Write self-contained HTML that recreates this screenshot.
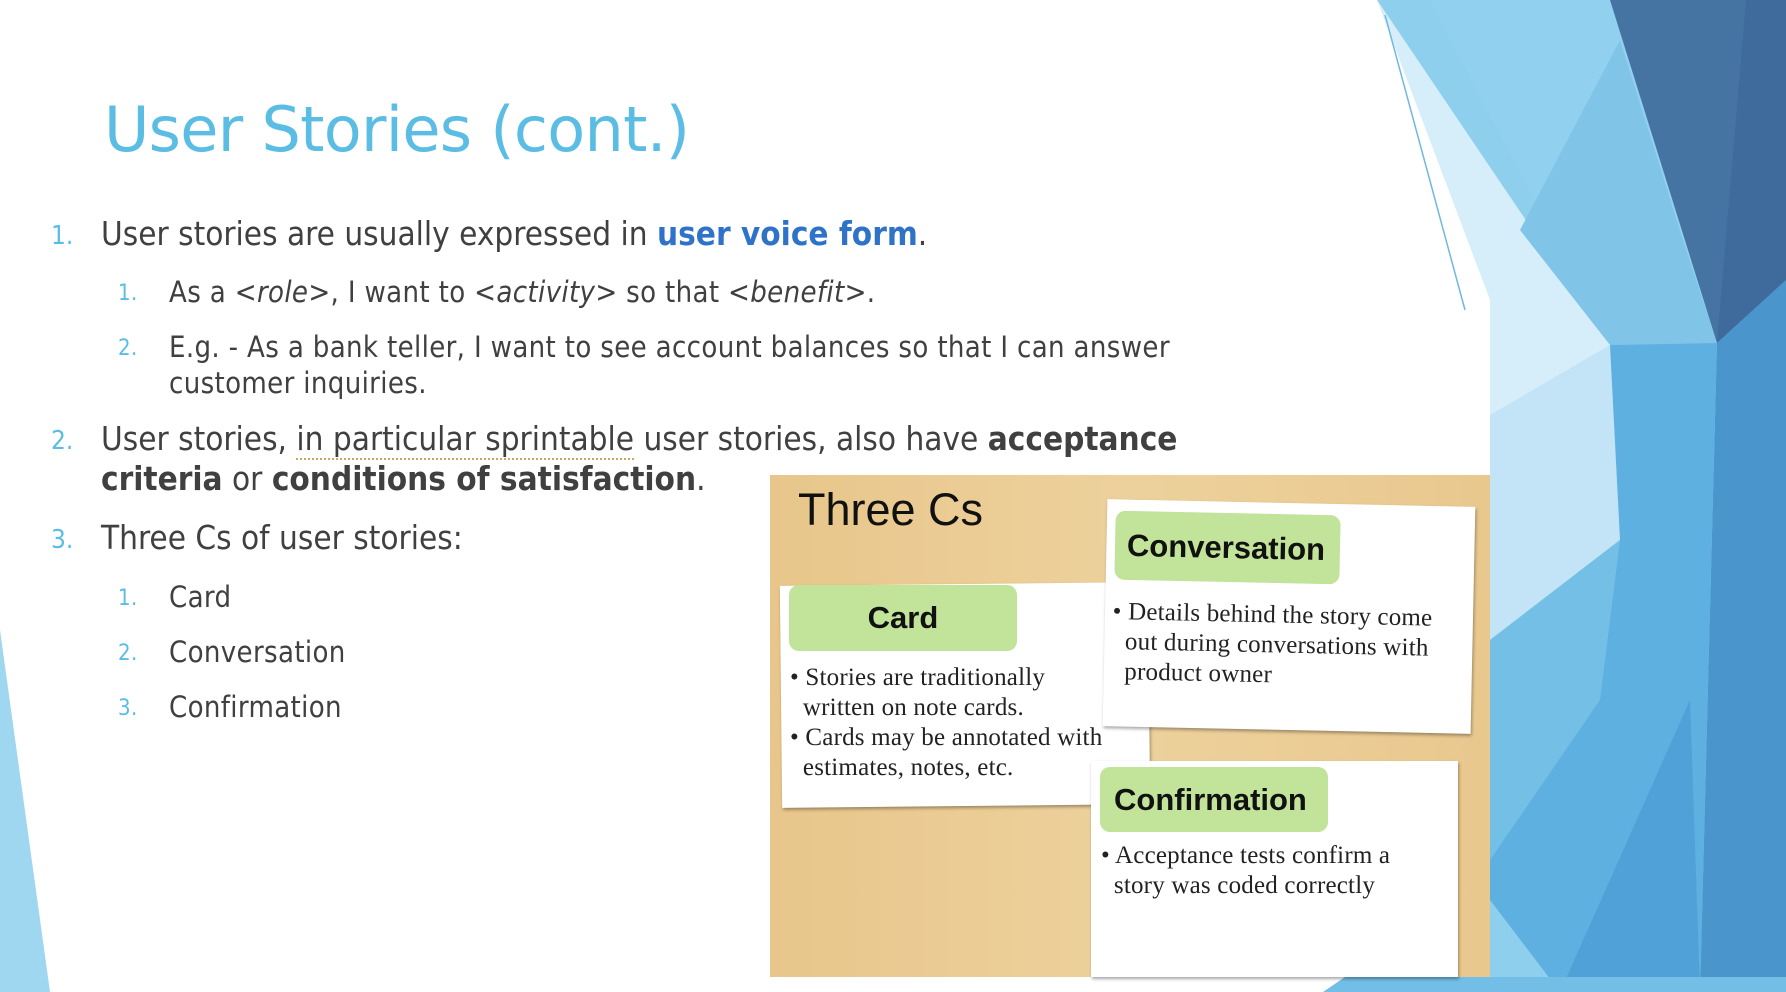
<!DOCTYPE html>
<html><head><meta charset="utf-8"><style>
html,body{margin:0;padding:0;width:1786px;height:992px;overflow:hidden;background:#fff;position:relative;font-family:"DejaVu Sans Condensed","Liberation Sans",sans-serif;color:#404040}
.a{position:absolute;white-space:nowrap}
.t{font-size:62px;color:#5bbde4;left:104px;top:93px;font-family:"DejaVu Sans","Liberation Sans",sans-serif;letter-spacing:-0.7px}
.n{color:#5bbde4}
.l1{font-size:33px}
.l2{font-size:29px;letter-spacing:0.35px}
.blue{color:#2f73c9;font-weight:bold}
.board{position:absolute;left:770px;top:475px;width:720px;height:502px;background:linear-gradient(90deg,#e8c68b,#edd19c 50%,#e9c88e)}
.card{position:absolute;background:#fff;box-shadow:1px 2px 3px rgba(0,0,0,.35)}
.lab{position:absolute;background:#c2e39a;border-radius:10px;font-family:"Liberation Sans",sans-serif;font-size:31px;font-weight:bold;color:#111}
.s{position:absolute;font-family:"Liberation Serif",serif;font-size:25px;letter-spacing:0.2px;color:#222;line-height:30px;white-space:nowrap}
</style></head><body>
<svg class="a" style="left:0;top:0" width="1786" height="992">
<polygon points="0,630 0,992 50,992" fill="#9fd6f0"/>
<polygon points="1377,0 1786,0 1786,992 1490,992 1490,415 1610,345" fill="#8fcfee"/>
<polygon points="1377,0 1610,345 1490,415 1490,300" fill="#d6eefa"/>
<polygon points="1430,0 1620,0 1717,343 1610,345" fill="#92d0ef"/>
<polygon points="1620,40 1683,240 1717,343 1610,345 1520,230" fill="#80c5e8"/>
<polygon points="1610,0 1786,0 1786,280 1717,343" fill="#4574a3"/>
<polygon points="1746,0 1786,0 1786,280 1717,343" fill="#3e6a9c"/>
<polygon points="1717,343 1786,280 1786,992 1700,992" fill="#4a96cc"/>
<polygon points="1610,345 1717,343 1700,992 1560,992 1490,900 1490,680" fill="#5eb0e1"/>
<polygon points="1610,345 1490,415 1490,640 1620,540" fill="#c3e4f6"/>
<polygon points="1560,992 1700,992 1690,700" fill="#4fa1d8"/>
<polygon points="1490,640 1620,540 1600,700 1490,860" fill="#74bfe6"/>
<polygon points="1323,992 1345,977 1786,977 1786,992" fill="#72bee7"/>
<line x1="1385" y1="15" x2="1465" y2="310" stroke="#6fb8e0" stroke-width="1.5"/>
</svg>
<div class="a t">User Stories (cont.)</div>

<div class="a l1 n" style="left:51px;top:221px;font-size:26px">1.</div>
<div class="a l1" style="left:101px;top:214px">User stories are usually expressed in <span class="blue">user voice form</span>.</div>
<div class="a l2 n" style="left:118px;top:281px;font-size:22px">1.</div>
<div class="a l2" style="left:169px;top:275px">As a &lt;<i>role</i>&gt;, I want to &lt;<i>activity</i>&gt; so that &lt;<i>benefit</i>&gt;.</div>
<div class="a l2 n" style="left:118px;top:336px;font-size:22px">2.</div>
<div class="a l2" style="left:169px;top:330px">E.g. - As a bank teller, I want to see account balances so that I can answer</div>
<div class="a l2" style="left:169px;top:366px">customer inquiries.</div>
<div class="a l1 n" style="left:51px;top:426px;font-size:26px">2.</div>
<div class="a l1" style="left:101px;top:419px">User stories, <span style="border-bottom:2px dotted #c9a860">in particular sprintable</span> user stories, also have <b>acceptance</b></div>
<div class="a l1" style="left:101px;top:459px"><b>criteria</b> or <b>conditions of satisfaction</b>.</div>
<div class="a l1 n" style="left:51px;top:525px;font-size:26px">3.</div>
<div class="a l1" style="left:101px;top:518px">Three Cs of user stories:</div>
<div class="a l2 n" style="left:118px;top:586px;font-size:22px">1.</div>
<div class="a l2" style="left:169px;top:580px">Card</div>
<div class="a l2 n" style="left:118px;top:641px;font-size:22px">2.</div>
<div class="a l2" style="left:169px;top:635px">Conversation</div>
<div class="a l2 n" style="left:118px;top:696px;font-size:22px">3.</div>
<div class="a l2" style="left:169px;top:690px">Confirmation</div>

<div class="board"></div>
<div class="a" style="left:798px;top:484px;font-size:45px;font-family:'Liberation Sans',sans-serif;color:#111">Three Cs</div>

<div class="card" style="left:781px;top:584px;width:368px;height:222px;transform:rotate(-0.6deg)"></div>
<div class="lab" style="left:789px;top:585px;width:228px;height:66px;line-height:66px;text-align:center">Card</div>
<div class="s" style="left:790px;top:663px">• Stories are traditionally<br>&nbsp;&nbsp;written on note cards.<br>• Cards may be annotated with<br>&nbsp;&nbsp;estimates, notes, etc.</div>

<div class="card" style="left:1105px;top:503px;width:368px;height:227px;transform:rotate(1.2deg)"></div>
<div class="lab" style="left:1115px;top:513px;width:225px;height:69px;line-height:69px;padding-left:12px;box-sizing:border-box;transform:rotate(1.2deg)">Conversation</div>
<div class="s" style="left:1113px;top:597px;transform:rotate(1.2deg);transform-origin:0 0">• Details behind the story come<br>&nbsp;&nbsp;out during conversations with<br>&nbsp;&nbsp;product owner</div>

<div class="card" style="left:1091px;top:761px;width:367px;height:216px"></div>
<div class="lab" style="left:1100px;top:767px;width:228px;height:65px;line-height:65px;padding-left:14px;box-sizing:border-box">Confirmation</div>
<div class="s" style="left:1101px;top:841px">• Acceptance tests confirm a<br>&nbsp;&nbsp;story was coded correctly</div>
</body></html>
